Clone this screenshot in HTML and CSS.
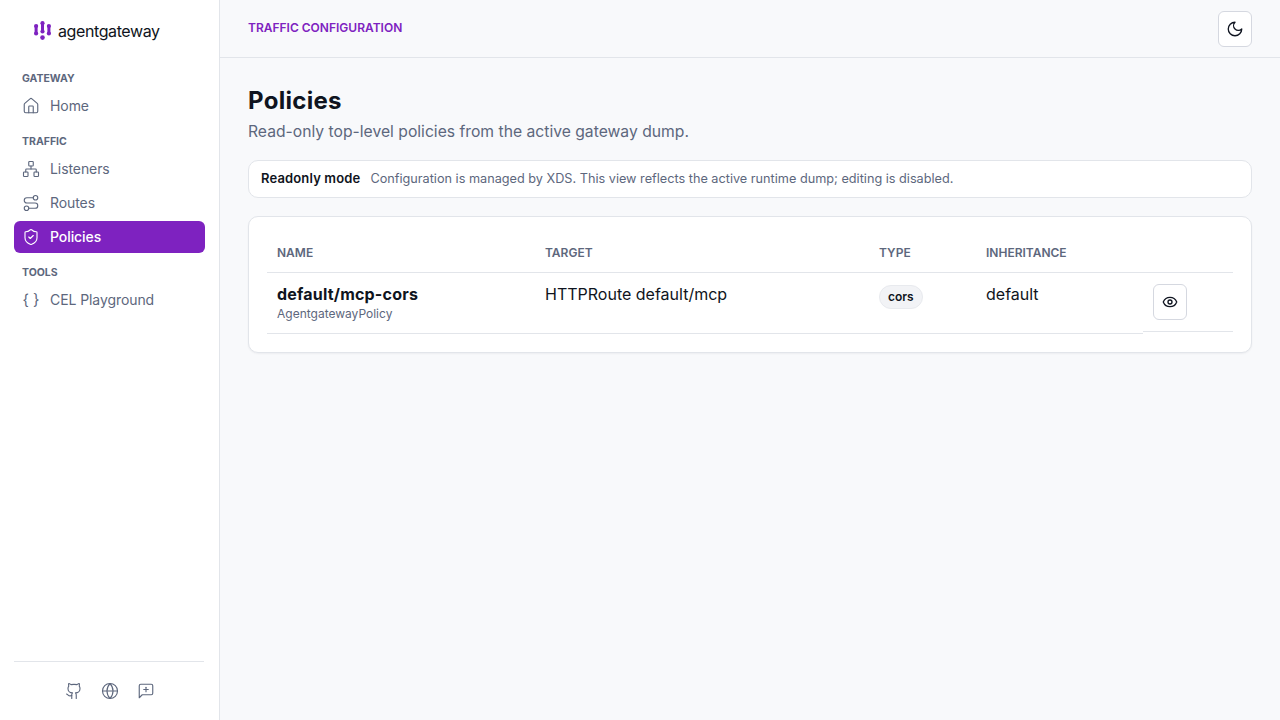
FILE: index.html
```html
<!DOCTYPE html>
<html lang="en">
<head>
  <meta charset="UTF-8" />
  <meta name="viewport" content="width=device-width, initial-scale=1.0"/>
  <title>agentgateway - Policies</title>
  <link rel="stylesheet" href="styles.css">
</head>
<body>
  <aside class="sidebar">
    <div class="brand">
      <svg class="brand-mark" viewBox="0 0 17 19" fill="#7e22c0">
        <circle cx="2.1" cy="5" r="2.1"/><circle cx="2.1" cy="12.5" r="2.1"/><rect x="0.6" y="5" width="3" height="7.5"/>
        <circle cx="8.5" cy="2.2" r="2.1"/><circle cx="8.5" cy="10.5" r="2.1"/><rect x="7" y="2.2" width="3" height="8"/><circle cx="8.5" cy="16.6" r="2.3"/>
        <circle cx="14.9" cy="5" r="2.1"/><circle cx="14.9" cy="12.5" r="2.1"/><rect x="13.4" y="5" width="3" height="7.5"/>
      </svg>
      <span class="brand-name">agentgateway</span>
    </div>

    <nav class="nav">
      <div class="nav-label">GATEWAY</div>
      <a class="nav-item">
        <svg class="icon" viewBox="0 0 24 24"><path d="M15 21v-8a1 1 0 0 0-1-1h-4a1 1 0 0 0-1 1v8"/><path d="M3 10a2 2 0 0 1 .709-1.528l7-5.999a2 2 0 0 1 2.582 0l7 5.999A2 2 0 0 1 21 10v9a2 2 0 0 1-2 2H5a2 2 0 0 1-2-2z"/></svg>
        Home
      </a>

      <div class="nav-label">TRAFFIC</div>
      <a class="nav-item">
        <svg class="icon" viewBox="0 0 24 24"><rect x="16" y="16" width="6" height="6" rx="1"/><rect x="2" y="16" width="6" height="6" rx="1"/><rect x="9" y="2" width="6" height="6" rx="1"/><path d="M5 16v-3a1 1 0 0 1 1-1h12a1 1 0 0 1 1 1v3"/><path d="M12 12V8"/></svg>
        Listeners
      </a>
      <a class="nav-item">
        <svg class="icon" viewBox="0 0 24 24"><circle cx="6" cy="19" r="3"/><path d="M9 19h8.5a3.5 3.5 0 0 0 0-7h-11a3.5 3.5 0 0 1 0-7H15"/><circle cx="18" cy="5" r="3"/></svg>
        Routes
      </a>
      <a class="nav-item active">
        <svg class="icon" viewBox="0 0 24 24"><path d="M20 13c0 5-3.5 7.5-7.66 8.95a1 1 0 0 1-.67-.01C7.5 20.5 4 18 4 13V6a1 1 0 0 1 1-1c2 0 4.5-1.2 6.24-2.72a1.17 1.17 0 0 1 1.52 0C14.51 3.81 17 5 19 5a1 1 0 0 1 1 1z"/><path d="m9 12 2 2 4-4"/></svg>
        Policies
      </a>

      <div class="nav-label">TOOLS</div>
      <a class="nav-item">
        <span class="brace-icon">{ }</span>
        CEL Playground
      </a>
    </nav>

    <div class="sidebar-footer">
      <svg class="icon" viewBox="0 0 24 24"><path d="M15 22v-4a4.8 4.8 0 0 0-1-3.5c3 0 6-2 6-5.5.08-1.25-.27-2.48-1-3.5.28-1.15.28-2.35 0-3.5 0 0-1 0-3 1.5-2.64-.5-5.36-.5-8 0C6 2 5 2 5 2c-.3 1.15-.3 2.35 0 3.5A5.403 5.403 0 0 0 4 9c0 3.5 3 5.5 6 5.5-.39.49-.68 1.05-.85 1.65-.17.6-.22 1.23-.15 1.85v4"/><path d="M9 18c-4.51 2-5-2-7-2"/></svg>
      <svg class="icon" viewBox="0 0 24 24"><circle cx="12" cy="12" r="10"/><path d="M12 2a14.5 14.5 0 0 0 0 20 14.5 14.5 0 0 0 0-20"/><path d="M2 12h20"/></svg>
      <svg class="icon" viewBox="0 0 24 24"><path d="M21 15a2 2 0 0 1-2 2H7l-4 4V5a2 2 0 0 1 2-2h14a2 2 0 0 1 2 2z"/><path d="M12 7v6"/><path d="M9 10h6"/></svg>
    </div>
  </aside>

  <div class="content">
    <header class="topbar">
      <span class="topbar-title">TRAFFIC CONFIGURATION</span>
      <button class="icon-btn" type="button">
        <svg class="icon" viewBox="0 0 24 24"><path d="M12 3a6 6 0 0 0 9 9 9 9 0 1 1-9-9Z"/></svg>
      </button>
    </header>

    <main class="page">
      <h1>Policies</h1>
      <p class="subtitle">Read-only top-level policies from the active gateway dump.</p>

      <div class="notice">
        <strong>Readonly mode</strong>
        <span>Configuration is managed by XDS. This view reflects the active runtime dump; editing is disabled.</span>
      </div>

      <div class="card">
        <table class="policy-table">
          <thead>
            <tr>
              <th class="col-name">NAME</th>
              <th class="col-target">TARGET</th>
              <th class="col-type">TYPE</th>
              <th class="col-inherit">INHERITANCE</th>
              <th class="col-actions"></th>
            </tr>
          </thead>
          <tbody>
            <tr>
              <td>
                <div class="policy-name">default/mcp-cors</div>
                <div class="policy-kind">AgentgatewayPolicy</div>
              </td>
              <td>HTTPRoute default/mcp</td>
              <td><span class="badge">cors</span></td>
              <td>default</td>
              <td class="actions">
                <button class="icon-btn small" type="button">
                  <svg class="icon" viewBox="0 0 24 24"><path d="M2.062 12.348a1 1 0 0 1 0-.696 10.75 10.75 0 0 1 19.876 0 1 1 0 0 1 0 .696 10.75 10.75 0 0 1-19.876 0"/><circle cx="12" cy="12" r="3"/></svg>
                </button>
              </td>
            </tr>
          </tbody>
        </table>
      </div>
    </main>
  </div>
</body>
</html>
```

FILE: styles.css
```css
* {
  box-sizing: border-box;
}

body {
  margin: 0;
  height: 100vh;
  display: flex;
  overflow: hidden;
  background-color: #f8f9fb;
  color: #0f1420;
  font-family: Inter, "Liberation Sans", sans-serif;
}

.sidebar {
  width: 220px;
  flex-shrink: 0;
  display: flex;
  flex-direction: column;
  background-color: white;
  border-right: 1px solid #e2e5ea;
  padding: 0 14px;
}

.brand {
  height: 59px;
  padding: 2px 0 0 20px;
  display: flex;
  align-items: center;
  gap: 7px;
}

.brand-mark {
  width: 17px;
  height: 19px;
}

.brand-name {
  font-size: 16px;
  font-weight: 400;
  letter-spacing: -0.4px;
}

.nav {
  flex: 1;
}

.nav-label {
  padding: 0 8px;
  height: 16px;
  margin: 11px 0 4px;
  font-size: 10.5px;
  line-height: 18px;
  font-weight: 700;
  color: #5d677d;
}

.nav-item {
  height: 32px;
  margin-bottom: 2px;
  padding: 0 8px;
  display: flex;
  align-items: center;
  gap: 10px;
  border-radius: 6px;
  font-size: 14px;
  line-height: 16px;
  letter-spacing: -0.08px;
  color: #5d677d;
}

.nav-item.active {
  background-color: #7e22c0;
  color: white;
  font-weight: 500;
}

.icon {
  width: 18px;
  height: 18px;
  fill: none;
  stroke: currentColor;
  stroke-width: 1.5;
  stroke-linecap: round;
  stroke-linejoin: round;
}

.brace-icon {
  width: 18px;
  flex-shrink: 0;
  text-align: center;
  white-space: nowrap;
  font-size: 15px;
}

.sidebar-footer {
  height: 59px;
  margin-right: 1px;
  padding-left: 1px;
  display: flex;
  justify-content: center;
  align-items: center;
  gap: 18px;
  border-top: 1px solid #e2e5ea;
  color: #5d677d;
}

.content {
  flex: 1;
  min-width: 0;
}

.topbar {
  height: 58px;
  display: flex;
  justify-content: space-between;
  align-items: center;
  padding: 0 28px;
  border-bottom: 1px solid #e2e5ea;
}

.topbar-title {
  margin-bottom: 2px;
  font-size: 12px;
  font-weight: 600;
  color: #7e22c0;
}

.icon-btn {
  width: 34px;
  height: 36px;
  padding: 0;
  display: flex;
  justify-content: center;
  align-items: center;
  background-color: white;
  border: 1px solid #d5d8e0;
  border-radius: 6px;
  color: #0f1420;
}

.icon-btn .icon {
  stroke-width: 1.75;
}

.icon-btn.small .icon {
  width: 16px;
  height: 16px;
  stroke-width: 2;
}

.page {
  padding: 28px;
}

h1 {
  margin: 0;
  font-size: 24px;
  line-height: 30px;
  font-weight: 700;
  letter-spacing: 0.3px;
}

.subtitle {
  margin: 6px 0 0;
  font-size: 15.7px;
  line-height: 20px;
  color: #5d677d;
}

.notice {
  margin-top: 18px;
  height: 38px;
  padding: 0 12px 2px;
  display: flex;
  align-items: center;
  gap: 10px;
  background-color: white;
  border: 1px solid #e2e5ea;
  border-radius: 10px;
  font-size: 12.7px;
  color: #5d677d;
}

.notice strong {
  font-size: 13px;
  font-weight: 600;
  letter-spacing: 0.15px;
  color: #0f1420;
}

.card {
  margin-top: 18px;
  padding: 18px;
  background-color: white;
  border: 1px solid #e2e5ea;
  border-radius: 10px;
  box-shadow: 0 1px 2px rgba(15, 20, 32, 0.05);
}

.policy-table {
  width: 100%;
  table-layout: fixed;
  border-collapse: separate;
  border-spacing: 0;
  font-size: 16px;
  line-height: 20px;
}

.policy-table th {
  height: 38px;
  padding: 0 10px 2px;
  text-align: left;
  font-size: 12px;
  font-weight: 600;
  color: #5d677d;
  border-bottom: 1px solid #e2e5ea;
}

.col-name { width: 268px; }
.col-target { width: 334px; }
.col-type { width: 107px; }
.col-inherit { width: 167px; }

.policy-table td {
  padding: 11px 10px;
  vertical-align: top;
  border-bottom: 1px solid #e2e5ea;
}

.policy-name {
  font-size: 16px;
  line-height: 20px;
  font-weight: 700;
  letter-spacing: 0.2px;
}

.policy-kind {
  margin-top: 2px;
  font-size: 12px;
  line-height: 16px;
  color: #5d677d;
}

.badge {
  display: inline-block;
  vertical-align: top;
  margin-top: 1px;
  padding: 0 8px;
  line-height: 22px;
  font-size: 12px;
  font-weight: 600;
  background-color: #f2f3f6;
  border: 1px solid #e8eaee;
  border-radius: 12px;
}

.policy-table td.actions {
  display: flex;
}
```
